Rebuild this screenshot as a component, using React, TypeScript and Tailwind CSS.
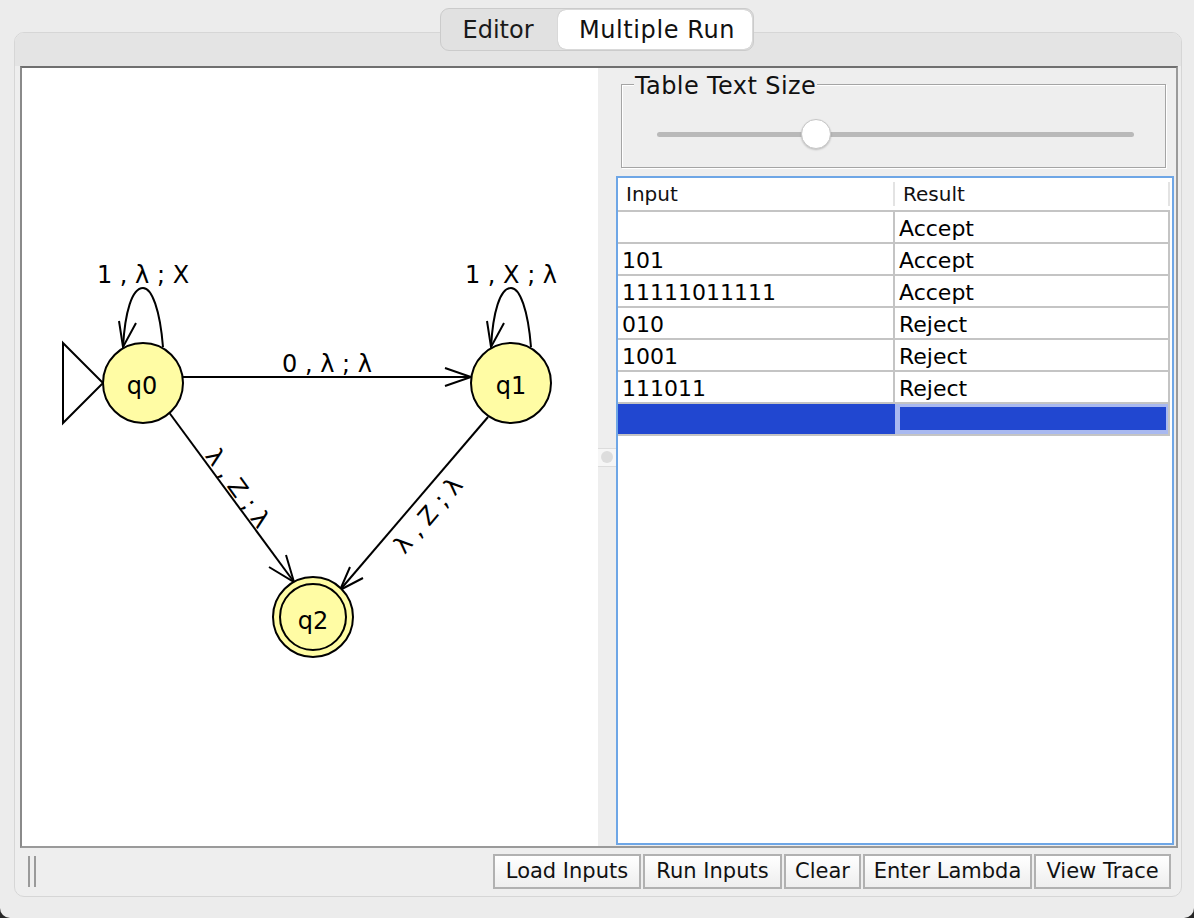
import React from "react";

const rows: [string, string][] = [
  ["", "Accept"],
  ["101", "Accept"],
  ["11111011111", "Accept"],
  ["010", "Reject"],
  ["1001", "Reject"],
  ["111011", "Reject"],
];

function Graph() {
  const fill = "#fffca4";
  return (
    <svg width="576" height="778" viewBox="22 68 576 778" className="block">
      <g stroke="#000" strokeWidth="2" fill="none" strokeLinejoin="miter">
        <polygon points="63,343 103,383 63,423" />
        <path d="M183 377 L471 377" />
        <path d="M445 368 L471 377 L445 386" />
        <path d="M163 347 C160 310, 152 288, 143 288 C132 288, 125 312, 123 347" />
        <path d="M119 321 L123 347 L136 323" />
        <path d="M531 347 C528 310, 520 288, 511 288 C500 288, 493 312, 491 347" />
        <path d="M487 321 L491 347 L504 323" />
        <path d="M168 411 L294 582" />
        <path d="M286 555 L294 582 L269 567" />
        <path d="M488 417 L340 590" />
        <path d="M350 567 L340 590 L363 578" />
      </g>
      <g stroke="#000" strokeWidth="2" fill={fill}>
        <circle cx="143" cy="383" r="40" />
        <circle cx="511" cy="383" r="40" />
        <circle cx="313" cy="617" r="40" />
      </g>
      <circle cx="313" cy="617" r="33" stroke="#000" strokeWidth="2" fill="none" />
      <g fontFamily="DejaVu Sans" fontSize="24" fill="#000" textAnchor="middle">
        <text x="142" y="394">q0</text>
        <text x="511" y="394">q1</text>
        <text x="313" y="629">q2</text>
      </g>
      <g fontFamily="DejaVu Sans" fontSize="24" fill="#000" textAnchor="middle">
        <text x="143" y="283">1 , λ ; X</text>
        <text x="511" y="283">1 , X ; λ</text>
        <text x="327" y="372">0 , λ ; λ</text>
        <text transform="translate(238 488) rotate(54)" dy="0.35em">λ , Z ; λ</text>
        <text transform="translate(428 515) rotate(-49.5)" dy="0.35em">λ , Z ; λ</text>
      </g>
    </svg>
  );
}

function Btn({ w, label }: { w: string; label: string }) {
  return (
    <div
      className={`${w} h-[35px] border-2 border-[#b1b1b1] bg-gradient-to-b from-white to-[#eeeeee] flex items-center justify-center text-[21px] leading-none text-[#111]`}
    >
      {label}
    </div>
  );
}

export default function App() {
  return (
    <div className="w-[1194px] h-[918px] bg-[#262626] font-['DejaVu_Sans',sans-serif] text-black overflow-hidden">
      <div className="w-full h-full bg-[#ececec] rounded-b-[10px] flex flex-col overflow-hidden">
        {/* tabs */}
        <div className="flex justify-center pt-[8px] relative z-10">
          <div className="flex h-[43px] w-[314px] rounded-[9px] border border-[#cbcbcb] bg-[#e1e1e1] p-[1px]">
            <div className="w-[116px] flex items-center justify-center text-[24px] leading-none text-[#1a1a1a] pr-[4px]">
              Editor
            </div>
            <div className="flex-1 rounded-[8px] bg-white shadow-[0_0_1px_rgba(0,0,0,0.35)] flex items-center justify-center text-[24px] leading-none text-[#111] tracking-[0.6px] pl-[4px]">
              Multiple Run
            </div>
          </div>
        </div>

        {/* tab pane */}
        <div className="ml-[14px] mr-[12px] mt-[-19px] h-[865px] rounded-[10px] border border-[#d6d6d6] bg-[#eeeeee] flex flex-col overflow-hidden">
          <div className="h-[33px] shrink-0 bg-[#e4e4e4]" />
          <div className="pl-[5px] pr-[3px] flex flex-col">
            {/* split pane */}
            <div className="h-[782px] flex border-2 border-t-[#6f6f6f] border-l-[#8a8a8a] border-r-[#9a9a9a] border-b-[#9a9a9a]">
              <div className="w-[576px] h-full bg-white">
                <Graph />
              </div>
              <div className="w-[18px] h-full bg-[#eeeeee] flex flex-col justify-center">
                <div className="h-[19px] border-y border-[#dcdcdc] bg-[#f6f6f6] flex items-center justify-center">
                  <div className="w-[12px] h-[12px] rounded-full bg-[#dddddd]" />
                </div>
              </div>
              <div className="flex-1 h-full bg-[#eeeeee] flex flex-col pt-[16px]">
                {/* group box */}
                <div className="relative ml-[5px] mr-[10px] h-[84px] border border-[#a4a4a4] shadow-[inset_1px_1px_0_#ffffff,1px_1px_0_#ffffff] pt-[47px] pl-[35px] pr-[31px]">
                  <div className="absolute top-[-13px] left-[12px] px-[1px] bg-[#eeeeee] text-[24px] leading-[28px] text-[#111] tracking-[0.4px]">
                    Table Text Size
                  </div>
                  <div className="relative h-[5px] rounded-full bg-[#b9b9b9]">
                    <div className="absolute left-[144px] top-[-13px] w-[30px] h-[30px] rounded-full bg-white border border-[#c6c6c6] shadow-[0_1px_2px_rgba(0,0,0,0.2)]" />
                  </div>
                </div>

                {/* table */}
                <div className="mt-[8px] mr-[2px] mb-[1px] flex-1 border-2 border-[#6ea6e6] bg-white flex flex-col">
                  <div className="flex items-center h-[32px] w-[552px]">
                    <div className="w-[275px] pl-[8px] text-[20px] leading-none text-[#111]">Input</div>
                    <div className="w-[2px] h-[24px] bg-[#e3e3e3]" />
                    <div className="w-[273px] pl-[8px] text-[20px] leading-none text-[#111]">Result</div>
                    <div className="w-[2px] h-[24px] bg-[#e3e3e3]" />
                  </div>
                  {rows.map(([a, b], i) => (
                    <div key={i} className="flex h-[32px] w-[552px] border-t-2 border-[#c4c4c4]">
                      <div className="w-[277px] border-r-2 border-[#c4c4c4] pl-[4px] pt-[3px] flex items-center text-[22px] leading-none">
                        {a}
                      </div>
                      <div className="w-[275px] border-r-2 border-[#c4c4c4] pl-[4px] pt-[3px] flex items-center text-[22px] leading-none">
                        {b}
                      </div>
                    </div>
                  ))}
                  <div className="flex h-[34px] w-[552px] border-y-2 border-[#c4c4c4]">
                    <div className="w-[277px] bg-[#2147d0]" />
                    <div className="w-[275px] border-r-2 border-[#c4c4c4] bg-[#a9b9f0] pt-[3px] pb-[4px] pl-[5px] pr-[2px]">
                      <div className="w-full h-full bg-[#2147d0]" />
                    </div>
                  </div>
                </div>
              </div>
            </div>

            {/* bottom bar */}
            <div className="h-[48px] flex pt-[6px] pr-[7px]">
              <div className="ml-[8px] mt-[2px] flex gap-[4px] h-[31px]">
                <div className="w-[2px] h-full bg-[#9a9a9a]" />
                <div className="w-[2px] h-full bg-[#9a9a9a]" />
              </div>
              <div className="flex-1" />
              <div className="flex gap-[2px]">
                <Btn w="w-[148px]" label="Load Inputs" />
                <Btn w="w-[139px]" label="Run Inputs" />
                <Btn w="w-[77px]" label="Clear" />
                <Btn w="w-[169px]" label="Enter Lambda" />
                <Btn w="w-[137px]" label="View Trace" />
              </div>
            </div>
          </div>
        </div>
      </div>
    </div>
  );
}
